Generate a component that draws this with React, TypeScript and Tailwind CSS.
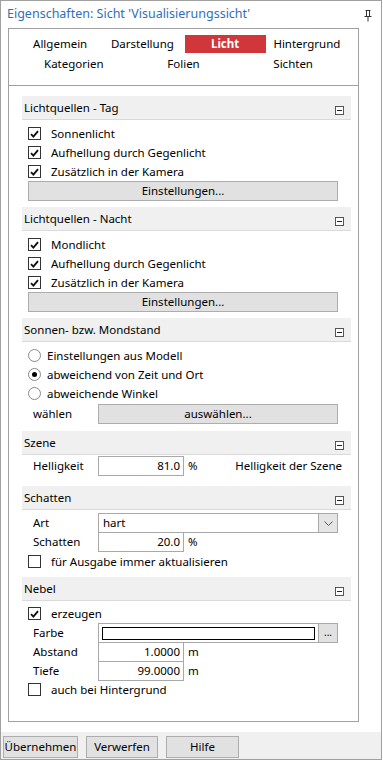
import React from 'react';

function CheckBox({ checked }: { checked?: boolean }) {
  return (
    <span className="w-[13px] h-[13px] border border-[#333333] bg-white flex items-center justify-center shrink-0">
      {checked && (
        <svg width="9" height="8" viewBox="0 0 9 8">
          <path d="M1 4.2 L3.4 6.6 L8 1.2" stroke="#111" strokeWidth="1.9" fill="none" />
        </svg>
      )}
    </span>
  );
}

function Radio({ checked }: { checked?: boolean }) {
  return (
    <span className="w-[13px] h-[13px] rounded-full border border-[#8a8a8a] bg-white flex items-center justify-center shrink-0">
      {checked && <span className="w-[5px] h-[5px] rounded-full bg-black" />}
    </span>
  );
}

function Section({ title, children, className }: { title: string; children: React.ReactNode; className?: string }) {
  return (
    <div className={className}>
      <div className="h-[24px] bg-[#f0f0f0] border-b border-[#dadada] flex items-center justify-between pl-[2px] pr-[7px]">
        <span>{title}</span>
        <span className="mt-[6px] w-[9px] h-[9px] border border-[#555] bg-white flex items-center justify-center">
          <span className="w-[5px] h-px bg-[#222]" />
        </span>
      </div>
      {children}
    </div>
  );
}

function CheckRow({ label, checked }: { label: string; checked?: boolean }) {
  return (
    <div className="h-[19px] flex items-center pl-[6px] gap-[10px]">
      <CheckBox checked={checked} />
      <span>{label}</span>
    </div>
  );
}

function RadioRow({ label, checked }: { label: string; checked?: boolean }) {
  return (
    <div className="h-[19px] flex items-center pl-[6px] gap-[6px]">
      <Radio checked={checked} />
      <span>{label}</span>
    </div>
  );
}

function WideButton({ label }: { label: string }) {
  return (
    <div className="ml-[6px] mr-[13px] h-[20px] bg-[#e1e1e1] border border-[#adadad] flex items-center justify-center">
      {label}
    </div>
  );
}

function NumberRow({ label, value, unit }: { label: string; value: string; unit: string }) {
  return (
    <div className="h-[20px] flex items-center -mt-px first:mt-0">
      <span className="w-[76px] pl-[11px]">{label}</span>
      <span className="w-[86px] h-[20px] border border-[#a9a9a9] bg-white flex items-center justify-end pr-[3px]">{value}</span>
      <span className="ml-[4px]">{unit}</span>
    </div>
  );
}

export default function App() {
  const tabsTop = ['Allgemein', 'Darstellung', 'Licht', 'Hintergrund'];
  const tabsBottom = ['Kategorien', 'Folien', 'Sichten'];

  return (
    <div className="w-[383px] h-[760px] bg-white text-[11.5px] leading-none text-black [font-family:'Noto_Sans',sans-serif] overflow-hidden">
      <div className="w-[382px] h-[760px] border border-[#a0a0a0] flex flex-col">
        {/* titel */}
        <div className="h-[27px] flex items-center justify-between pl-[6px] pr-[9px] shrink-0">
          <span className="text-[#2f6fba] text-[12.5px]">Eigenschaften: Sicht 'Visualisierungssicht'</span>
          <svg width="8" height="12" viewBox="0 0 8 12" className="mt-[2px]">
            <path d="M1.5 0.5 H6.5 M2.5 0.5 V6 M5.5 0.5 V6 M0.5 6.5 H7.5 M4 6.5 V11.5" stroke="#333" strokeWidth="1" fill="none" />
          </svg>
        </div>

        {/* panel */}
        <div className="ml-[7px] w-[351px] h-[694px] border border-[#a0a0a0] shrink-0 flex flex-col">
          <div className="px-[10px] pt-[6px] pb-[12px] border-b border-[#a0a0a0] flex flex-col gap-[2px]">
            <div className="grid grid-cols-4 h-[18px]">
              {tabsTop.map((t) =>
                t === 'Licht' ? (
                  <span key={t} className="ml-px bg-[#d0363a] text-white font-bold flex items-center justify-center">
                    {t}
                  </span>
                ) : (
                  <span key={t} className="flex items-center justify-center">
                    {t}
                  </span>
                )
              )}
            </div>
            <div className="grid grid-cols-3 h-[18px]">
              {tabsBottom.map((t) => (
                <span key={t} className="flex items-center justify-center">
                  {t}
                </span>
              ))}
            </div>
          </div>

          <div className="pl-[13px] pr-[7px] pt-[10px]">
            <Section title="Lichtquellen - Tag">
              <div className="mt-[4px]">
                <CheckRow label="Sonnenlicht" checked />
                <CheckRow label="Aufhellung durch Gegenlicht" checked />
                <CheckRow label="Zusätzlich in der Kamera" checked />
              </div>
              <WideButton label="Einstellungen..." />
            </Section>

            <Section title="Lichtquellen - Nacht" className="mt-[6px]">
              <div className="mt-[4px]">
                <CheckRow label="Mondlicht" checked />
                <CheckRow label="Aufhellung durch Gegenlicht" checked />
                <CheckRow label="Zusätzlich in der Kamera" checked />
              </div>
              <WideButton label="Einstellungen..." />
            </Section>

            <Section title="Sonnen- bzw. Mondstand" className="mt-[6px]">
              <div className="mt-[4px]">
                <RadioRow label="Einstellungen aus Modell" />
                <RadioRow label="abweichend von Zeit und Ort" checked />
                <RadioRow label="abweichende Winkel" />
              </div>
              <div className="h-[20px] flex items-center mt-px">
                <span className="w-[76px] pl-[11px]">wählen</span>
                <div className="flex-1 mr-[13px] h-[20px] bg-[#e1e1e1] border border-[#adadad] flex items-center justify-center">
                  auswählen...
                </div>
              </div>
            </Section>

            <Section title="Szene" className="mt-[7px]">
              <div className="h-[20px] flex items-center mt-px">
                <span className="w-[76px] pl-[11px]">Helligkeit</span>
                <span className="w-[86px] h-[20px] border border-[#a9a9a9] bg-white flex items-center justify-end pr-[3px]">81.0</span>
                <span className="ml-[4px]">%</span>
                <span className="ml-auto mr-[9px]">Helligkeit der Szene</span>
              </div>
            </Section>

            <Section title="Schatten" className="mt-[10px]">
              <div className="mt-[3px] h-[20px] flex items-center">
                <span className="w-[76px] pl-[11px]">Art</span>
                <div className="w-[240px] h-[20px] border border-[#a9a9a9] bg-white flex">
                  <span className="flex-1 flex items-center pl-[4px]">hart</span>
                  <span className="w-[19px] bg-[#e5e5e5] border-l border-[#a9a9a9] flex items-center justify-center">
                    <svg width="9" height="5" viewBox="0 0 9 5">
                      <path d="M0.5 0.5 L4.5 4.5 L8.5 0.5" stroke="#555" strokeWidth="1" fill="none" />
                    </svg>
                  </span>
                </div>
              </div>
              <div className="-mt-px h-[20px] flex items-center">
                <span className="w-[76px] pl-[11px]">Schatten</span>
                <span className="w-[86px] h-[20px] border border-[#a9a9a9] bg-white flex items-center justify-end pr-[3px]">20.0</span>
                <span className="ml-[4px]">%</span>
              </div>
              <CheckRow label="für Ausgabe immer aktualisieren" />
            </Section>

            <Section title="Nebel" className="mt-[6px]">
              <div className="mt-[3px]">
                <CheckRow label="erzeugen" checked />
              </div>
              <div className="h-[20px] flex items-center">
                <span className="w-[76px] pl-[11px]">Farbe</span>
                <div className="w-[221px] h-[20px] border border-[#a9a9a9] bg-white flex items-center justify-center">
                  <span className="w-[213px] h-[13px] border border-black bg-white" />
                </div>
                <span className="w-[20px] h-[20px] -ml-px bg-[#e1e1e1] border border-[#a9a9a9] flex items-center justify-center text-[10px] pb-[2px]">
                  ...
                </span>
              </div>
              <div className="-mt-px">
                <NumberRow label="Abstand" value="1.0000" unit="m" />
                <NumberRow label="Tiefe" value="99.0000" unit="m" />
              </div>
              <div className="-mt-px">
                <CheckRow label="auch bei Hintergrund" />
              </div>
            </Section>
          </div>
        </div>

        {/* buttons */}
        <div className="mt-[10px] flex-1 bg-[#f0f0f0] flex items-start pt-[4px] pl-[2px] gap-[8px]">
          <span className="w-[75px] h-[22px] bg-[#e1e1e1] border border-[#adadad] flex items-center justify-center">Übernehmen</span>
          <span className="w-[72px] h-[22px] bg-[#e1e1e1] border border-[#adadad] flex items-center justify-center">Verwerfen</span>
          <span className="w-[73px] h-[22px] bg-[#e1e1e1] border border-[#adadad] flex items-center justify-center">Hilfe</span>
        </div>
      </div>
    </div>
  );
}
